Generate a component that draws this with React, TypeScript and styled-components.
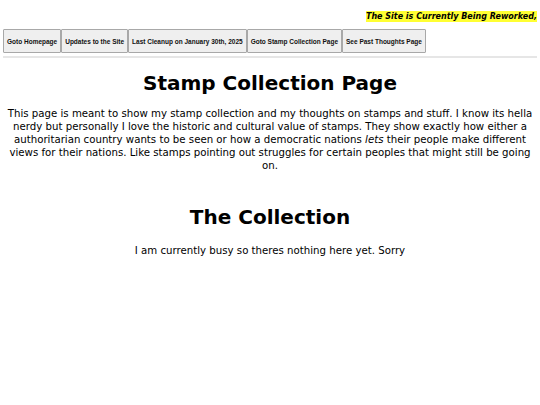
import React from 'react';
import styled, { createGlobalStyle } from 'styled-components';

const GlobalStyle = createGlobalStyle`
  html, body {
    margin: 0;
    padding: 0;
    background: #ffffff;
  }
  body {
    padding: 0 3px;
    font-family: "DejaVu Sans", Verdana, sans-serif;
    color: #000;
  }
`;

const Banner = styled.div`
  display: flex;
  justify-content: flex-end;
  padding-top: 11px;
  height: 18px;
`;

const BannerText = styled.span`
  background: #ffff33;
  font-weight: bold;
  font-style: italic;
  font-size: 8px;
  line-height: 11px;
  height: 11px;
`;

const Nav = styled.nav`
  display: flex;
`;

const NavButton = styled.button`
  font-family: "Liberation Sans", Arial, sans-serif;
  font-weight: bold;
  font-size: 6.5px;
  height: 24px;
  padding: 0 3px;
  background: #efefef;
  border: 1px solid #a8a8a8;
  border-radius: 1px;
  color: #111;
  cursor: pointer;
`;

const Rule = styled.hr`
  margin: 3px 0 0;
  border: none;
  border-top: 2px solid #e6e6e6;
`;

const Main = styled.main`
  text-align: center;
`;

const Heading = styled.h1<{ $top: number }>`
  font-size: 20px;
  font-weight: bold;
  margin: ${(p) => p.$top}px 0 0;
  line-height: 26px;
`;

const Paragraph = styled.p<{ $top: number }>`
  font-size: 10.2px;
  line-height: 13px;
  margin: ${(p) => p.$top}px 0 0;
`;

const App: React.FC = () => {
  return (
    <>
      <GlobalStyle />
      <Banner>
        <BannerText>The Site is Currently Being Reworked,</BannerText>
      </Banner>
      <Nav>
        <NavButton>Goto Homepage</NavButton>
        <NavButton>Updates to the Site</NavButton>
        <NavButton>Last Cleanup on January 30th, 2025</NavButton>
        <NavButton>Goto Stamp Collection Page</NavButton>
        <NavButton>See Past Thoughts Page</NavButton>
      </Nav>
      <Rule />
      <Main>
        <Heading $top={12}>Stamp Collection Page</Heading>
        <Paragraph $top={11}>
          This page is meant to show my stamp collection and my thoughts on stamps and stuff. I
          know its hella nerdy but personally I love the historic and cultural value of stamps.
          They show exactly how either a authoritarian country wants to be seen or how a
          democratic nations <em>lets</em> their people make different views for their nations.
          Like stamps pointing out struggles for certain peoples that might still be going on.
        </Paragraph>
        <Heading $top={32}>The Collection</Heading>
        <Paragraph $top={14}>I am currently busy so theres nothing here yet. Sorry</Paragraph>
      </Main>
    </>
  );
};

export default App;
